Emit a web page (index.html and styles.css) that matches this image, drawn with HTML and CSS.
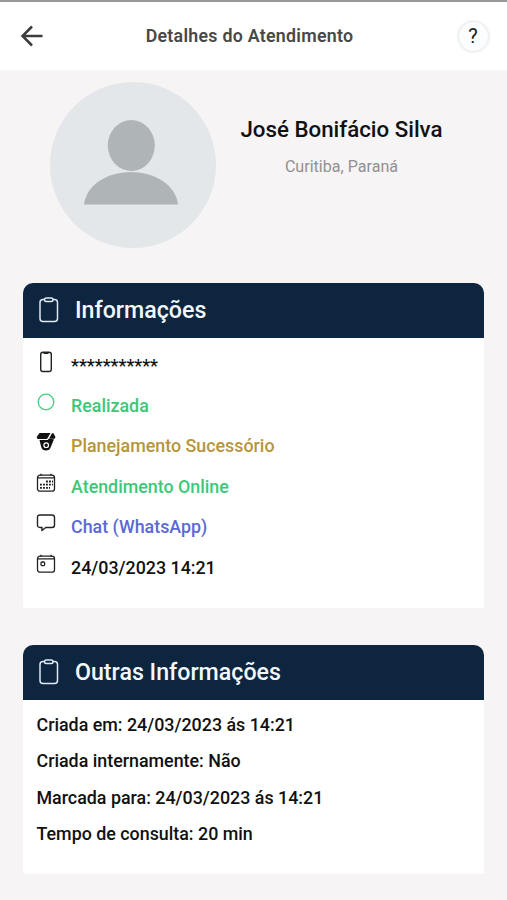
FILE: index.html
```html
<!DOCTYPE html>
<html lang="pt-BR">

<head>
    <meta charset="UTF-8">
    <meta name="viewport" content="width=device-width, initial-scale=1.0">
    <title>Detalhes do Atendimento</title>
    <link rel="stylesheet" href="styles.css">
</head>

<body>
    <header class="topbar">
        <button class="back" type="button" aria-label="Voltar">
            <svg width="24" height="22" viewBox="0 0 24 22" fill="none" stroke="#3d3d3d" stroke-width="2.5">
                <path d="M22.5 11H3M12 1.5L2.5 11l9.500 9.500" />
            </svg>
        </button>
        <h1 class="topbar-title">Detalhes do Atendimento</h1>
        <button class="help" type="button">?</button>
    </header>

    <main>
        <section class="profile">
            <svg class="avatar" width="166" height="166" viewBox="0 0 166 166">
                <circle cx="83" cy="83" r="83" fill="#e4e7e9" />
                <ellipse cx="81.300" cy="63.500" rx="23.500" ry="25.500" fill="#afb4b7" />
                <path d="M34 122.500C36 104 56 90 81 90s45 14 47 32.500z" fill="#afb4b7" />
            </svg>
            <div class="profile-text">
                <h2 class="name">José Bonifácio Silva</h2>
                <p class="city">Curitiba, Paraná</p>
            </div>
        </section>

        <section class="card">
            <div class="card-header">
                <svg width="20" height="26" viewBox="0 0 20 26" fill="none" stroke="#dfeaf5" stroke-width="1.500">
                    <rect x="1" y="2.500" width="17.500" height="22" rx="3" />
                    <rect x="5.500" y="1" width="8.500" height="3.500" rx="1.750" fill="#0d253f" />
                </svg>
                <h3 class="card-title">Informações</h3>
            </div>
            <ul class="info">
                <li>
                    <svg width="20" height="22" viewBox="0 0 20 22" fill="none" stroke="#222" stroke-width="1.400">
                        <rect x="4.700" y="1.200" width="10.600" height="19.300" rx="2.200" />
                        <path d="M7.500 2h5" stroke-width="2" />
                    </svg>
                    <span class="phone">***********</span>
                </li>
                <li>
                    <svg width="20" height="22" viewBox="0 0 20 22" fill="none" stroke="#4fcb84" stroke-width="1.300">
                        <circle cx="10" cy="11" r="7.800" />
                    </svg>
                    <span class="green">Realizada</span>
                </li>
                <li>
                    <svg width="20" height="22" viewBox="0 0 20 22" fill="#111">
                        <path d="M3.500 2h11l-3.500 6H1.500L.7 6z" />
                        <path d="M16 2.200h1.500l2 4-1 1.500h-5.500z" />
                        <path d="M3.500 9h8.300l.8-1.200 5.400.4-3.200 7.800a5 5 0 0 1-9.600 0z" />
                        <circle cx="10.200" cy="14.200" r="2.300" fill="#111" stroke="#fff" stroke-width="1.200" />
                    </svg>
                    <span class="gold">Planejamento Sucessório</span>
                </li>
                <li>
                    <svg width="20" height="22" viewBox="0 0 20 22" fill="none" stroke="#222" stroke-width="1.300">
                        <rect x="1.500" y="3.200" width="17" height="16" rx="2.500" />
                        <path d="M1.500 5.800h17M5 1.800v2M15 1.800v2" />
                        <path d="M10 9.500h7M4 12.700h13M4 15.900h10" stroke-width="1.800" stroke-dasharray="1.900 1.100" />
                    </svg>
                    <span class="green">Atendimento Online</span>
                </li>
                <li>
                    <svg width="20" height="22" viewBox="0 0 20 22" fill="none" stroke="#222" stroke-width="1.400" stroke-linejoin="round">
                        <path d="M4 3h12q2.500 0 2.500 2.500v7.500q0 2.500-2.500 2.500H9.800L6 18.500v-3H4q-2.500 0-2.500-2.500V5.500Q1.500 3 4 3z" />
                    </svg>
                    <span class="blue">Chat (WhatsApp)</span>
                </li>
                <li>
                    <svg width="20" height="22" viewBox="0 0 20 22" fill="none" stroke="#222" stroke-width="1.300">
                        <rect x="1.500" y="3.200" width="17" height="16" rx="2.500" />
                        <path d="M1.500 5.800h17M5 1.800v2M15 1.800v2" />
                        <rect x="5" y="9" width="3.600" height="3.600" rx="1" />
                    </svg>
                    <span>24/03/2023 14:21</span>
                </li>
            </ul>
        </section>

        <section class="card">
            <div class="card-header">
                <svg width="20" height="26" viewBox="0 0 20 26" fill="none" stroke="#dfeaf5" stroke-width="1.500">
                    <rect x="1" y="2.500" width="17.500" height="22" rx="3" />
                    <rect x="5.500" y="1" width="8.500" height="3.500" rx="1.750" fill="#0d253f" />
                </svg>
                <h3 class="card-title">Outras Informações</h3>
            </div>
            <div class="other">
                <p>Criada em: 24/03/2023 ás 14:21</p>
                <p>Criada internamente: Não</p>
                <p>Marcada para: 24/03/2023 ás 14:21</p>
                <p>Tempo de consulta: 20 min</p>
            </div>
        </section>
    </main>
</body>

</html>
```

FILE: styles.css
```css
* {
    box-sizing: border-box;
    margin: 0;
    padding: 0;
}

body {
    font-family: Roboto, "Liberation Sans", sans-serif;
    background-color: #f6f4f5;
    color: #111;
    height: 900px;
    overflow: hidden;
}

svg {
    display: block;
    flex: none;
}

.topbar {
    display: grid;
    grid-template-columns: 50px 1fr 50px;
    align-items: center;
    height: 70px;
    padding: 0 8px 0 0;
    background-color: #fff;
    border-top: 2px solid #999;
}

.back {
    padding-left: 20px;
    border: none;
    background: none;
}

.topbar-title {
    padding-bottom: 1px;
    font-size: 17.8px;
    font-weight: 600;
    letter-spacing: 0.27px;
    text-align: center;
    color: #484848;
}

.help {
    width: 29px;
    height: 29px;
    margin-right: 2px;
    justify-self: center;
    border: none;
    border-radius: 50%;
    background-color: #fcfdfe;
    box-shadow: 0 0 3px 1px #e2e4e6;
    font-family: inherit;
    font-size: 20px;
    font-weight: 400;
    color: #222;
}

.profile {
    display: flex;
    gap: 24px;
    height: 212.5px;
    padding: 12px 0 0 50px;
}

.profile-text {
    width: 203px;
    padding-top: 34px;
    text-align: center;
}

.name {
    font-size: 22.3px;
    line-height: 26px;
    font-weight: 500;
    white-space: nowrap;
}

.city {
    margin-top: 15px;
    font-size: 16.1px;
    line-height: 20px;
    color: #929092;
}

.card {
    margin: 0 23.5px 37px 22.5px;
    background-color: #fff;
    border-radius: 10px 10px 2px 2px;
}

.card-header {
    display: flex;
    align-items: center;
    gap: 16px;
    height: 55px;
    padding: 0 0 1px 16.5px;
    background-color: #0d253f;
    border-radius: 10px 10px 0 0;
    color: #f3f8fd;
}

.card-title {
    font-size: 23.2px;
    font-weight: 500;
}

.info {
    height: 270.5px;
    padding: 4px 13.5px 0;
    list-style: none;
    font-size: 17.85px;
    font-weight: 500;
}

.info li {
    display: flex;
    align-items: center;
    gap: 15px;
    height: 40.4px;
}

.info span {
    padding-top: 7px;
}

.green {
    color: #3dc878;
}

.gold {
    color: #b7953a;
}

.blue {
    color: #5b69d6;
}

.other {
    height: 174px;
    padding: 6.5px 14px 0;
    font-size: 17.85px;
    font-weight: 500;
    line-height: 36.6px;
}
```
